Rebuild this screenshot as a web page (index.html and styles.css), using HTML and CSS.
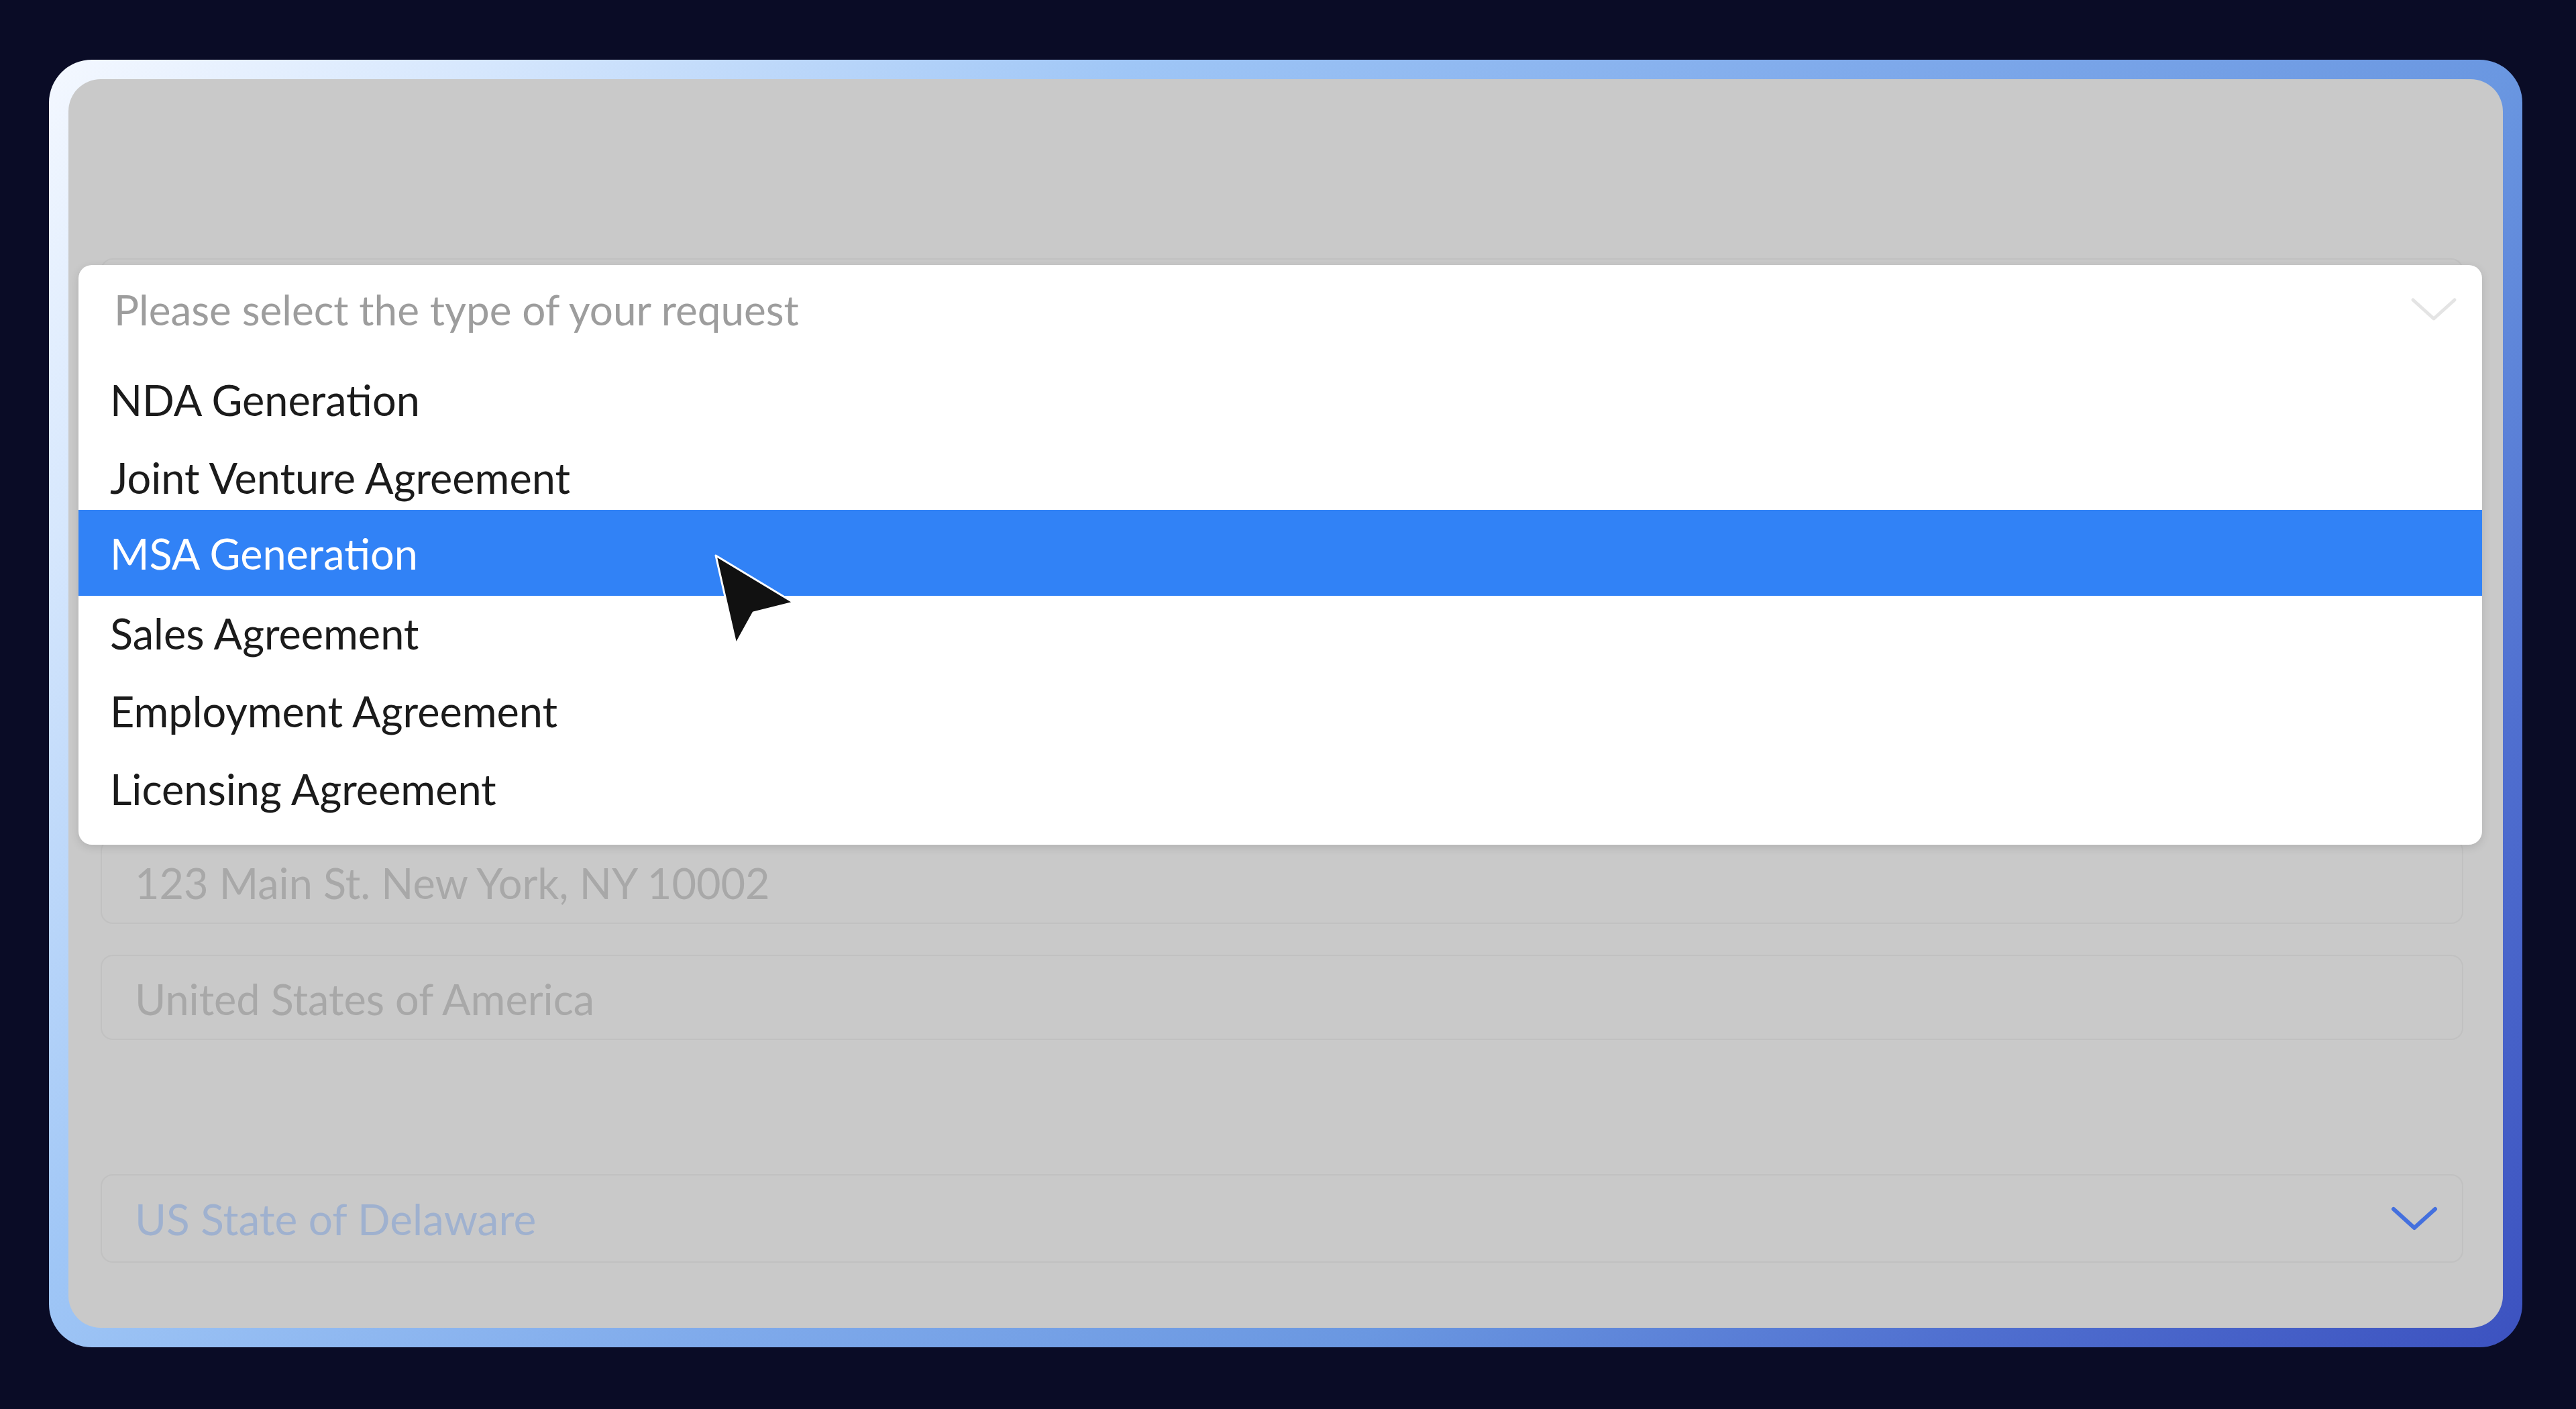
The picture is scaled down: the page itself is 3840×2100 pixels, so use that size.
FILE: index.html
```html
<!DOCTYPE html>
<html lang="en">
  <head>
    <meta charset="UTF-8" />
    <meta name="viewport" content="width=device-width, initial-scale=1.0" />
    <title>Request type</title>
    <link rel="stylesheet" href="styles.css">
  </head>
  <body>
    <main class="page">
      <section class="card">
        <div class="card-inner">
          <!-- form behind the open dropdown (top fields are covered) -->
          <form class="request-form">
            <div class="field"></div>
            <div class="field"></div>
            <div class="field"></div>
            <div class="field"></div>
            <div class="field"></div>
            <div class="field">123 Main St. New York, NY 10002</div>
            <div class="field">United States of America</div>
            <div class="field field-law">
              <span>US State of Delaware</span>
              <svg class="chevron" viewBox="0 0 70 40">
                <polyline points="4,6 35,34 66,6" />
              </svg>
            </div>
          </form>

          <!-- open dropdown -->
          <div class="dropdown">
            <div class="dropdown-head">
              <span>Please select the type of your request</span>
              <svg class="chevron chevron-light" viewBox="0 0 70 40">
                <polyline points="4,6 35,34 66,6" />
              </svg>
            </div>
            <ul class="dropdown-list">
              <li>NDA Generation</li>
              <li>Joint Venture Agreement</li>
              <li class="selected">MSA Generation</li>
              <li>Sales Agreement</li>
              <li>Employment Agreement</li>
              <li>Licensing Agreement</li>
            </ul>
          </div>
        </div>
      </section>
    </main>

    <svg class="cursor" viewBox="0 0 135 150">
      <polygon points="7,8 123,78 63,93 37,140" />
    </svg>
  </body>
</html>
```

FILE: styles.css
```css
:root {
  --background: #0a0c26;
  --overlay: #c9c9c9;
  --field-line: #c1c1c1;
  --text: #1b1b1b;
  --placeholder: #9d9d9d;
  --faded: #a8a8a8;
  --accent: #3182f6;
  --law: #9fb1cf;
  --chevron: #4470de;
}

* {
  margin: 0;
  padding: 0;
  box-sizing: border-box;
  font-family: "Lato", "Open Sans", sans-serif;
}

body {
  background: var(--background);
  width: 3840px;
  height: 2100px;
  overflow: hidden;
  position: relative;
}

.page {
  padding: 89px 0 0 73px;
}

/* card with the gradient frame */
.card {
  width: 3687px;
  height: 1919px;
  padding: 29px;
  border-radius: 64px;
  background: linear-gradient(
    132deg,
    #f4f8ff 0%,
    #d6e7fd 12%,
    #9fc6f6 30%,
    #7faaeb 50%,
    #6a97e1 68%,
    #5070d0 84%,
    #3c52c0 100%
  );
}

.card-inner {
  position: relative;
  height: 100%;
  border-radius: 48px;
  background: var(--overlay);
}

/* faded form */
.request-form {
  display: flex;
  flex-direction: column;
  gap: 46px;
  padding: 267px 59px 0 48px;
}

.field {
  height: 127px;
  display: flex;
  align-items: center;
  justify-content: space-between;
  padding: 4px 36px 0 49px;
  border: 2px solid var(--field-line);
  border-radius: 18px;
  color: var(--faded);
  font-size: 63px;
}

.field-law {
  margin-top: 154px;
  height: 132px;
  padding-top: 0;
  color: var(--law);
  font-size: 64px;
}

.chevron {
  width: 70px;
  height: 40px;
  fill: none;
  stroke: var(--chevron);
  stroke-width: 6;
  stroke-linecap: round;
  stroke-linejoin: round;
}

.chevron-light {
  stroke: #e4e4e4;
  stroke-width: 5;
}

/* dropdown */
.dropdown {
  position: absolute;
  left: 15px;
  top: 277px;
  width: 3583px;
  padding-bottom: 26px;
  background: #ffffff;
  border-radius: 20px;
  box-shadow: 0 4px 14px rgba(0, 0, 0, 0.12);
}

.dropdown-head {
  height: 142px;
  display: flex;
  align-items: center;
  justify-content: space-between;
  padding: 0 37px 10px 53px;
  color: var(--placeholder);
  font-size: 62px;
}

.dropdown-list {
  list-style: none;
}

.dropdown-list li {
  height: 116px;
  display: flex;
  align-items: center;
  padding-left: 47px;
  color: var(--text);
  font-size: 63px;
}

.dropdown-list li.selected {
  height: 128px;
  margin: -9px 0 -3px 0;
  background: var(--accent);
  color: #ffffff;
}

/* mouse pointer */
.cursor {
  position: absolute;
  left: 1060px;
  top: 820px;
  width: 135px;
  height: 150px;
}

.cursor polygon {
  fill: #111111;
  stroke: #ffffff;
  stroke-width: 3;
  stroke-linejoin: round;
}
```
